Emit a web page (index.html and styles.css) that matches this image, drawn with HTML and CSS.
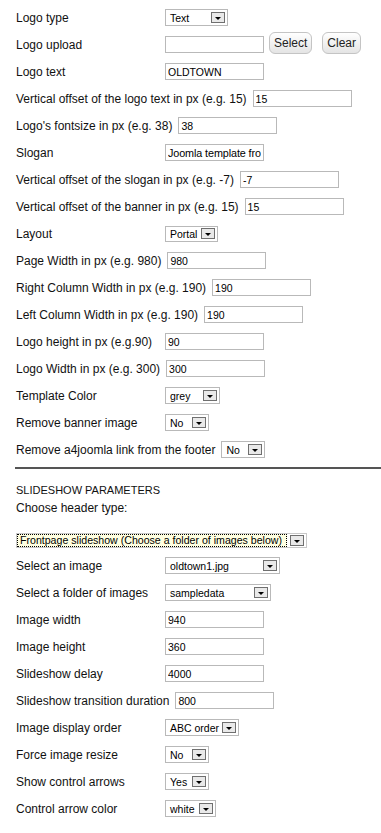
FILE: index.html
```html
<!DOCTYPE html>
<html lang="en">
  <head>
    <meta charset="UTF-8" />
    <meta name="viewport" content="width=device-width, initial-scale=1.0" />
    <title>Template parameters</title>
    <link rel="stylesheet" href="styles.css">
  </head>
  <body>
    <div class="params">
      <div class="row">
        <label>Logo type</label>
        <div class="select w63"><span>Text</span><i class="arrow"></i></div>
      </div>
      <div class="row">
        <label>Logo upload</label>
        <input type="text" value="" />
        <button class="btn btn-select">Select</button>
        <button class="btn btn-clear">Clear</button>
      </div>
      <div class="row">
        <label>Logo text</label>
        <input type="text" value="OLDTOWN" />
      </div>
      <div class="row">
        <label>Vertical offset of the logo text in px (e.g. 15)</label>
        <input type="text" value="15" />
      </div>
      <div class="row">
        <label>Logo's fontsize in px (e.g. 38)</label>
        <input type="text" value="38" />
      </div>
      <div class="row">
        <label>Slogan</label>
        <input type="text" class="slogan" value="Joomla template from a4joomla" />
      </div>
      <div class="row">
        <label>Vertical offset of the slogan in px (e.g. -7)</label>
        <input type="text" value="-7" />
      </div>
      <div class="row">
        <label>Vertical offset of the banner in px (e.g. 15)</label>
        <input type="text" value="15" />
      </div>
      <div class="row">
        <label>Layout</label>
        <div class="select w53 short"><span>Portal</span><i class="arrow"></i></div>
      </div>
      <div class="row">
        <label>Page Width in px (e.g. 980)</label>
        <input type="text" value="980" />
      </div>
      <div class="row">
        <label>Right Column Width in px (e.g. 190)</label>
        <input type="text" value="190" />
      </div>
      <div class="row">
        <label>Left Column Width in px (e.g. 190)</label>
        <input type="text" value="190" />
      </div>
      <div class="row">
        <label>Logo height in px (e.g.90)</label>
        <input type="text" value="90" />
      </div>
      <div class="row">
        <label>Logo Width in px (e.g. 300)</label>
        <input type="text" value="300" />
      </div>
      <div class="row">
        <label>Template Color</label>
        <div class="select w55"><span>grey</span><i class="arrow"></i></div>
      </div>
      <div class="row">
        <label>Remove banner image</label>
        <div class="select w44"><span>No</span><i class="arrow"></i></div>
      </div>
      <div class="row">
        <label>Remove a4joomla link from the footer</label>
        <div class="select w44"><span>No</span><i class="arrow"></i></div>
      </div>

      <hr />

      <div class="group-title">SLIDESHOW PARAMETERS</div>
      <div class="group-label">Choose header type:</div>
      <div class="select focused wide"><span>Frontpage slideshow (Choose a folder of images below)</span><i class="arrow"></i></div>

      <div class="row">
        <label>Select an image</label>
        <div class="select w115"><span>oldtown1.jpg</span><i class="arrow"></i></div>
      </div>
      <div class="row">
        <label>Select a folder of images</label>
        <div class="select w106"><span>sampledata</span><i class="arrow"></i></div>
      </div>
      <div class="row">
        <label>Image width</label>
        <input type="text" value="940" />
      </div>
      <div class="row">
        <label>Image height</label>
        <input type="text" value="360" />
      </div>
      <div class="row">
        <label>Slideshow delay</label>
        <input type="text" value="4000" />
      </div>
      <div class="row">
        <label>Slideshow transition duration</label>
        <input type="text" value="800" />
      </div>
      <div class="row">
        <label>Image display order</label>
        <div class="select w74"><span>ABC order</span><i class="arrow"></i></div>
      </div>
      <div class="row">
        <label>Force image resize</label>
        <div class="select w44"><span>No</span><i class="arrow"></i></div>
      </div>
      <div class="row">
        <label>Show control arrows</label>
        <div class="select w44"><span>Yes</span><i class="arrow"></i></div>
      </div>
      <div class="row">
        <label>Control arrow color</label>
        <div class="select w51"><span>white</span><i class="arrow"></i></div>
      </div>
    </div>
  </body>
</html>
```

FILE: styles.css
```css
body {
  font-family: "Liberation Sans", Arial, sans-serif;
  font-size: 12px;
  color: #111;
  background: #fff;
  margin: 0;
  padding: 0;
}
.params {
  padding: 4px 0 0 16px;
}
.row {
  display: flex;
  align-items: center;
  height: 27px;
}
.row label {
  min-width: 143px;
  margin-right: 6px;
  white-space: nowrap;
}
input[type="text"] {
  box-sizing: border-box;
  width: 99px;
  height: 17px;
  margin: 0;
  padding: 1px 2px 0;
  border: 1px solid #b9b9b9;
  font-family: "Liberation Sans", Arial, sans-serif;
  font-size: 10.5px;
  color: #000;
  background: #fff;
  outline: none;
}
input.slogan {
  font-size: 10.8px;
  letter-spacing: -0.1px;
}

/* fake selects */
.select {
  box-sizing: border-box;
  display: flex;
  align-items: center;
  height: 17px;
  border: 1px solid #b9b9b9;
  background: #fff;
  font-size: 10.5px;
  color: #000;
  white-space: nowrap;
  overflow: hidden;
}
.select span {
  flex: 1;
  padding-left: 4px;
  overflow: hidden;
}
.select.short {
  height: 16px;
}
.select .arrow {
  box-sizing: border-box;
  flex: none;
  position: relative;
  width: 14px;
  height: 11px;
  margin-right: 2px;
  border: 1px solid #6f6f6f;
  background: #e9e9e9;
}
.select .arrow::after {
  content: "";
  position: absolute;
  left: 3px;
  top: 4px;
  border-left: 3px solid transparent;
  border-right: 3px solid transparent;
  border-top: 3px solid #000;
}
.w44 { width: 44px; }
.w51 { width: 51px; }
.w53 { width: 53px; }
.w55 { width: 55px; }
.w63 { width: 63px; }
.w74 { width: 74px; }
.w106 { width: 106px; }
.w115 { width: 115px; }

.select.wide {
  width: 291px;
  height: 15px;
  margin: 17px 0 4px;
  border-color: #c8c8c8;
  font-size: 10.6px;
}
.select.focused span {
  background: #ffffe1;
  outline: 1px dotted #000;
  outline-offset: -1px;
  padding-left: 3px;
  line-height: 13px;
  margin-right: 3px;
}

.btn {
  box-sizing: border-box;
  height: 22px;
  margin: -3px 0 0 5px;
  padding: 0 4px;
  border: 1px solid #c4c4c4;
  border-radius: 6px;
  background: linear-gradient(#ffffff, #e4e4e4);
  font-family: "Liberation Sans", Arial, sans-serif;
  font-size: 12px;
  color: #222;
}
.btn-clear {
  margin-left: 10px;
}

hr {
  margin: 4px 0 0 -1px;
  height: 2px;
  border: 0;
  background: #555;
}
.group-title {
  margin-top: 13px;
  line-height: 16px;
  font-size: 11px;
}
.group-label {
  margin-top: 2px;
  line-height: 16px;
}
```
